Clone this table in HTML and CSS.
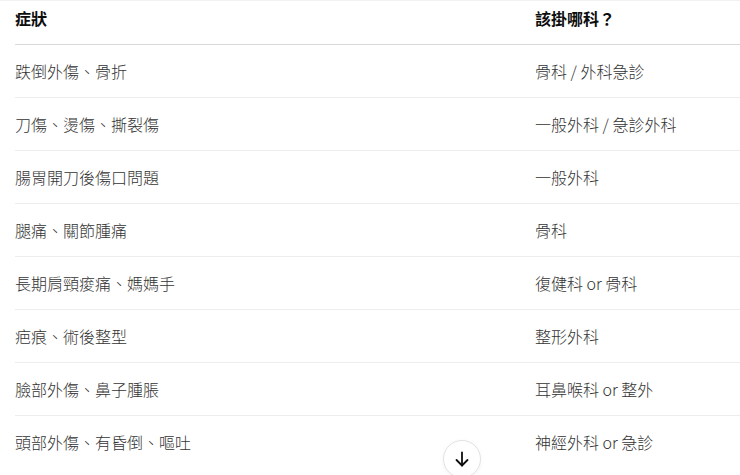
FILE: index.html
```html
<!DOCTYPE html>
<html lang="zh-Hant">
<head>
    <meta charset="UTF-8">
    <meta name="viewport" content="width=device-width, initial-scale=1.0">
    <title>該掛哪科</title>
    <link rel="stylesheet" href="styles.css">
</head>
<body>
    <div class="wrap">
        <table class="triage">
            <thead>
                <tr>
                    <th>症狀</th>
                    <th>該掛哪科？</th>
                </tr>
            </thead>
            <tbody>
                <tr><td>跌倒外傷、骨折</td><td>骨科 / 外科急診</td></tr>
                <tr><td>刀傷、燙傷、撕裂傷</td><td>一般外科 / 急診外科</td></tr>
                <tr><td>腸胃開刀後傷口問題</td><td>一般外科</td></tr>
                <tr><td>腿痛、關節腫痛</td><td>骨科</td></tr>
                <tr><td>長期肩頸痠痛、媽媽手</td><td>復健科 or 骨科</td></tr>
                <tr><td>疤痕、術後整型</td><td>整形外科</td></tr>
                <tr><td>臉部外傷、鼻子腫脹</td><td>耳鼻喉科 or 整外</td></tr>
                <tr><td>頭部外傷、有昏倒、嘔吐</td><td>神經外科 or 急診</td></tr>
            </tbody>
        </table>
    </div>

    <button class="scroll-down" type="button" aria-label="Scroll down">
        <svg width="20" height="20" viewBox="0 0 20 20" fill="none" stroke="#0d0d0d" stroke-width="1.8" stroke-linecap="round" stroke-linejoin="round">
            <path d="M10 3.5v13"/>
            <path d="M4.5 11l5.5 5.5 5.5-5.5"/>
        </svg>
    </button>
</body>
</html>
```

FILE: styles.css
```css
html, body {
    margin: 0;
    padding: 0;
    background: #fff;
    overflow: hidden;
}

body {
    font-family: "Noto Sans CJK TC", "Noto Sans", "Liberation Sans", sans-serif;
    color: #333;
    font-size: 16px;
    height: 475px;
    position: relative;
}

.wrap {
    border-top: 1px solid #f2f2f2;
    padding-left: 15px;
}

.triage {
    border-collapse: collapse;
    width: 760px;
}

.triage th,
.triage td {
    text-align: left;
    padding: 0;
    line-height: 20px;
}

.triage th:first-child,
.triage td:first-child {
    width: 520px;
}

.triage th {
    font-weight: 700;
    color: #0d0d0d;
    height: 43px;
    vertical-align: top;
    padding-top: 7px;
    box-sizing: border-box;
    border-bottom: 1px solid #d9d9d9;
}

.triage td {
    font-weight: 300;
    height: 52px;
    vertical-align: middle;
    border-bottom: 1px solid #ededed;
}

.triage tbody tr:last-child td {
    border-bottom: none;
}

.scroll-down {
    position: absolute;
    left: 443px;
    top: 440px;
    width: 38px;
    height: 38px;
    border-radius: 50%;
    border: 1px solid #e3e3e3;
    background: #fff;
    display: flex;
    align-items: center;
    justify-content: center;
    padding: 0;
    cursor: pointer;
    box-shadow: 0 1px 4px rgba(0, 0, 0, 0.05);
}
```
